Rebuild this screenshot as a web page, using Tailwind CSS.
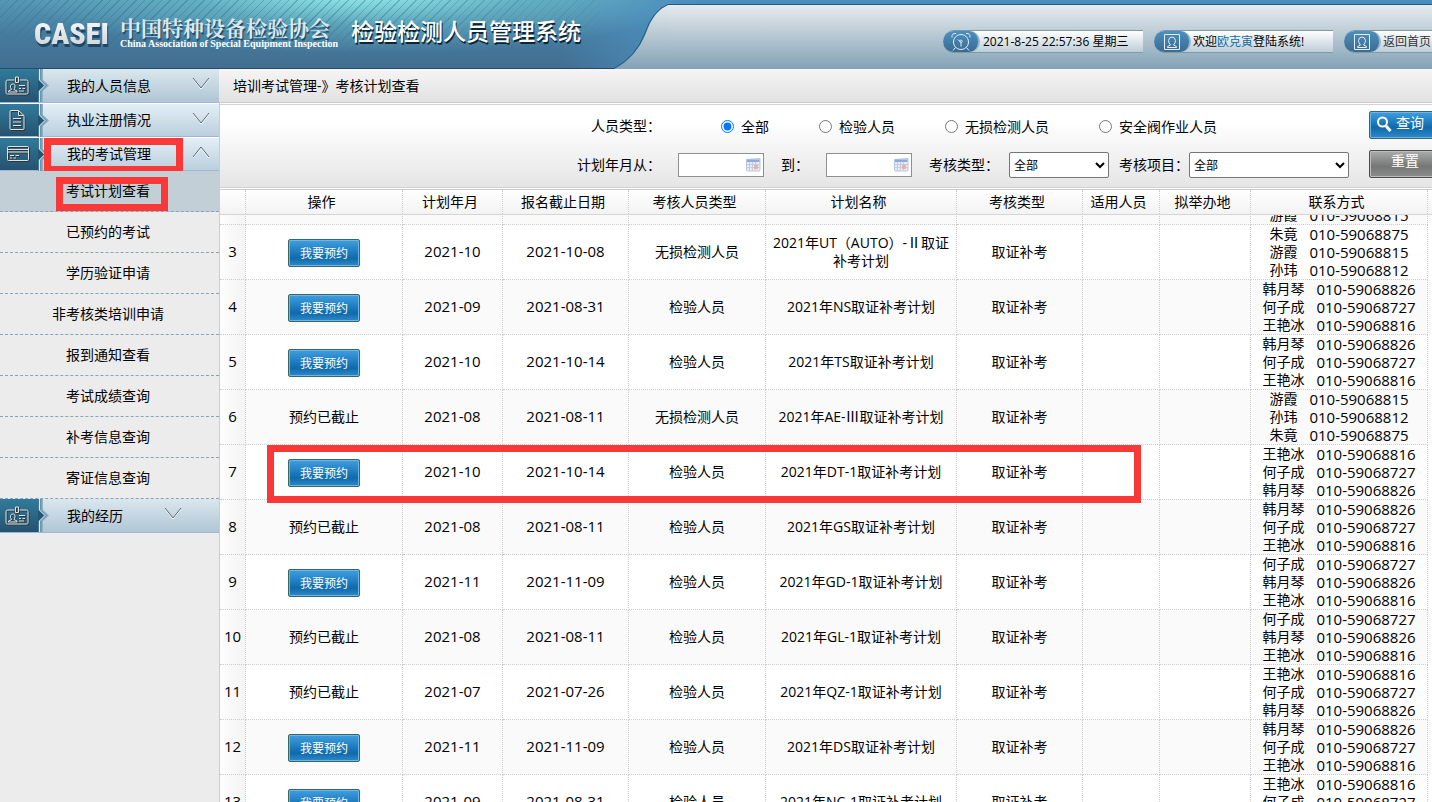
<!DOCTYPE html>
<html lang="zh-CN">
<head>
<meta charset="utf-8">
<title>检验检测人员管理系统</title>
<script src="https://cdn.jsdelivr.net/npm/@tailwindcss/browser@4"></script>
</head>
<body class="flex h-screen flex-col overflow-hidden bg-[#ececec] font-['Open_Sans','Noto_Sans_CJK_SC',sans-serif] text-[14px] leading-[18px] text-black">

<svg class="absolute size-0">
  <defs>
    <linearGradient id="panel" gradientUnits="userSpaceOnUse" x1="0" y1="4" x2="0" y2="69"><stop offset="0" stop-color="#e6ebee"/><stop offset=".5" stop-color="#b5c7d1"/><stop offset="1" stop-color="#83a2b6"/></linearGradient>
  </defs>
  <symbol id="i-card" viewBox="0 0 24 20"><path d="M9.500 4H2.500Q1 4 1 5.500V16.500Q1 18 2.500 18H21.500Q23 18 23 16.500V5.500Q23 4 21.500 4H14.500M10.500 1H13.500V6.500H10.500ZM3.500 16V15L6.500 13.500Q5 11.500 5.500 9.500Q6.500 7.500 8.500 8Q10.500 8.500 10 11Q9.700 12.500 9 13.500L12 15V16ZM14 9.500H20M14 12.500H16M17.500 12.500H20M14 15H19"/></symbol>
  <symbol id="i-doc" viewBox="0 0 24 22"><path d="M13.500 1.500H6Q5 1.500 5 2.500V19.500Q5 20.500 6 20.500H18Q19 20.500 19 19.500V6.500ZM13.500 1.500V6.500H19M8 9.500H16M8 13H16M8 16.500H16"/></symbol>
  <symbol id="i-pay" viewBox="0 0 24 20"><path d="M2.500 2.500H21.500Q22.500 2.500 22.500 3.500V15.500Q22.500 16.500 21.500 16.500H2.500Q1.500 16.500 1.500 15.500V3.500Q1.500 2.500 2.500 2.500ZM1.500 5.500H22.500M1.500 8H22.500M4 11.500H8M9.500 11.500H13M4 14H6M7.500 14H10"/></symbol>
  <symbol id="i-user" viewBox="0 0 18 18"><path d="M1.500 1.500H16.500V16.500H1.500ZM4.500 14.500V13.500L7.500 12Q5.500 10 5.500 7.500Q6 4 9 4Q12 4 12.500 7.500Q12.500 10 10.500 12L13.500 13.500V14.500Z"/></symbol>
  <symbol id="i-clock" viewBox="0 0 20 20"><path d="M10 2.500A7.500 7.500 0 1 1 9.990 2.500M1 5.500Q.5 1 5 1.500M19 5.500Q19.500 1 15 1.500M4.500 15.500L2 18.500M15.500 15.500L18 18.500M10 10V14.500M9.500 10L7 7.500M10 8A1.200 1.200 0 1 1 9.990 8"/></symbol>
  <symbol id="i-notch" viewBox="0 0 11 33"><path d="M3 0H5V11L11 16.500L5 22V33H3Z" fill="#8db0c2"/><path d="M0 0V11L5 16.500L0 22V33H3.500V22L9 16.500L3.500 11V0Z" fill="#6995ac"/><path d="M0 0H.5V11L6 16.500L.5 22V33H0Z" fill="#225573"/><path d="M1.500 0V11L7 16.500L1.500 22V33" fill="none" stroke="#dce8ee"/></symbol>
  <symbol id="i-down" viewBox="0 0 18 13"><path d="M1 2L9 12L17 2" stroke="#fff"/><path d="M1 1L9 11L17 1" stroke="#5a6a72"/></symbol>
  <symbol id="i-cal" viewBox="0 0 15 14"><path d="M.5 1.500L14 .5V12Q14 13 13 13H1.500Q.5 13 .5 12Z" fill="#e6ecf7" stroke="#b9c5dd"/><path d="M1 1.500H13.500V4H1Z" fill="#8fa9dc"/><path d="M3.500 4V12.500M6.500 4V12.500M9.500 4V12.500M1 6.500H13.500M1 9.500H13.500" stroke="#c0cde4"/><path d="M8 7H12V11H8Z" fill="#f0b09c"/></symbol>
</svg>

<header class="relative flex h-[69px] shrink-0 overflow-hidden bg-[radial-gradient(ellipse_340px_60px_at_360px_-6px,rgba(150,240,238,.95),rgba(120,210,215,.4)_50%,transparent),linear-gradient(to_right,transparent_560px,#4b8dbd_680px),linear-gradient(to_bottom,#5598b5,#467c9f_50%,#416d90)]">
  <div class="absolute inset-y-0 left-0 w-[600px] bg-[repeating-linear-gradient(135deg,rgba(30,90,120,.3)_0_1px,transparent_1px_6px)] mask-[radial-gradient(ellipse_420px_56px_at_260px_0px,black_40%,transparent)]"></div>
  <div class="relative flex w-[614px] shrink-0 items-center border-b border-[#274a6b] pl-[34px]">
    <div class="w-[86px] bg-[linear-gradient(#fff,#c6cdd2)] bg-clip-text font-['Roboto_Condensed','Liberation_Sans_Narrow',Roboto] text-[30px] leading-[40px] font-black text-transparent drop-shadow-[1px_3px_0_#1d4763]">CASEI</div>
    <div class="w-[231px] pb-1">
      <div class="font-['Noto_Serif_CJK_SC','Noto_Sans_CJK_SC',serif] text-[21px] leading-[23px] font-bold text-[#dde8ee] text-shadow-[1px_2px_1px_#1d4763]">中国特种设备检验协会</div>
      <div class="font-['Liberation_Serif',serif] text-[10px] leading-[10px] font-bold whitespace-nowrap text-white">China Association of Special Equipment Inspection</div>
    </div>
    <h1 class="pb-[6px] text-[23px] leading-[28px] font-medium whitespace-nowrap text-white text-shadow-[1px_2px_0_#0c2536]">检验检测人员管理系统</h1>
  </div>
  <svg class="relative h-[69px] w-[56px] shrink-0" viewBox="0 0 56 69" fill="none"><path d="M0 69Q22 58 32 33Q40 10 56 4V69Z" fill="url(#panel)"/><path d="M0 68.500Q22 57 31 33Q39 10 54 4.500H56" stroke="#2c5878"/></svg>
  <div class="relative mt-1 flex flex-1 justify-end border-t border-[#2c5878] bg-[linear-gradient(#e6ebee,#b5c7d1_50%,#83a2b6)]">
    <div class="flex w-[489px] gap-[11px] overflow-hidden pt-[25px] text-[12px]">
      <div class="flex h-[23px] w-[200px] shrink-0 items-center rounded-l-full border-y border-[#7e9bab] bg-[linear-gradient(#fff,#bccdd7)] whitespace-nowrap">
        <span class="mr-[3px] flex h-[21px] w-[37px] items-center justify-center rounded-full border-r-2 border-[#8db3cd] bg-[linear-gradient(#4c8fc0,#3a6b90)]"><svg class="size-[20px]" fill="none" stroke="#e3eef5"><use href="#i-clock"/></svg></span>
        <time>2021-8-25 22:57:36 星期三</time>
      </div>
      <div class="flex h-[23px] w-[179px] shrink-0 items-center rounded-l-full border-y border-[#7e9bab] bg-[linear-gradient(#fff,#bccdd7)] whitespace-nowrap">
        <span class="mr-[2px] flex h-[21px] w-[37px] items-center justify-center rounded-full border-r-2 border-[#8db3cd] bg-[linear-gradient(#4c8fc0,#3a6b90)]"><svg class="size-[18px]" fill="none" stroke="#e3eef5"><use href="#i-user"/></svg></span>
        <span>欢迎<a href="#" class="text-[#1b6c9f]">欧克寅</a>登陆系统!</span>
      </div>
      <div class="flex h-[23px] w-[120px] shrink-0 items-center rounded-l-full border-y border-[#7e9bab] bg-[linear-gradient(#fff,#bccdd7)] whitespace-nowrap">
        <span class="mr-[2px] flex h-[21px] w-[37px] items-center justify-center rounded-full border-r-2 border-[#8db3cd] bg-[linear-gradient(#4c8fc0,#3a6b90)]"><svg class="size-[18px]" fill="none" stroke="#e3eef5"><use href="#i-user"/></svg></span>
        <a href="#" class="text-[#333]">返回首页</a>
      </div>
    </div>
  </div>
</header>

<div class="flex min-h-0 flex-1">
  <nav class="w-[219px] shrink-0">
    <button type="button" class="flex h-[34px] w-full items-center border-b border-[#a3b4d6] bg-[linear-gradient(#dae7ee,#b0c6d5)]">
      <span class="flex h-full w-[38px] items-center bg-[linear-gradient(#317b9b,#255270)] pl-[5px]"><svg class="h-[20px] w-[24px] drop-shadow-[1px_1px_0_#333]" fill="none" stroke="#e2e2e2"><use href="#i-card"/></svg></span><svg class="mr-[18px] h-[33px] w-[11px]"><use href="#i-notch"/></svg>我的人员信息<svg class="mb-1 ml-[41px] h-[13px] w-[18px]" fill="none"><use href="#i-down"/></svg>
    </button>
    <button type="button" class="flex h-[34px] w-full items-center border-y border-t-white border-b-[#a3b4d6] bg-[linear-gradient(#e4eff6,#bacfdd)]">
      <span class="flex h-full w-[38px] items-center bg-[linear-gradient(#317b9b,#255270)] pl-[5px]"><svg class="h-[22px] w-[24px] drop-shadow-[1px_1px_0_#333]" fill="none" stroke="#e2e2e2"><use href="#i-doc"/></svg></span><svg class="mr-[18px] h-[33px] w-[11px]"><use href="#i-notch"/></svg>执业注册情况<svg class="mb-1 ml-[41px] h-[13px] w-[18px]" fill="none"><use href="#i-down"/></svg>
    </button>
    <button type="button" class="relative flex h-[34px] w-full items-center border-y border-t-white border-b-[#a3b4d6] bg-[linear-gradient(#e4eff6,#bacfdd)]">
      <span class="flex h-full w-[38px] items-center bg-[linear-gradient(#317b9b,#255270)] pl-[6px]"><svg class="h-[20px] w-[24px] drop-shadow-[1px_1px_0_#333]" fill="none" stroke="#e2e2e2"><use href="#i-pay"/></svg></span><svg class="mr-[18px] h-[33px] w-[11px]"><use href="#i-notch"/></svg>我的考试管理<svg class="mb-1 ml-[41px] h-[13px] w-[18px]" fill="none" viewBox="0 0 18 13"><path d="M1 12L9 2L17 12" stroke="#fff"/><path d="M1 11L9 1L17 11" stroke="#5a6a72"/></svg>
      <span class="absolute top-0 left-[44px] h-[35px] w-[139px] border-[7px] border-[#fb3838]"></span>
    </button>
    <div class="text-center">
      <a href="#" class="relative block h-[41px] border-b border-dashed border-[#86a5b8] bg-[#c2cfd6] pt-[11px] pr-[3px]">考试计划查看<span class="absolute top-[6px] left-[56px] h-[34px] w-[112px] border-[7px] border-[#fb3838]"></span></a>
      <a href="#" class="block h-[41px] border-b border-dashed border-[#86a5b8] pt-[11px] pr-[3px]">已预约的考试</a>
      <a href="#" class="block h-[41px] border-b border-dashed border-[#86a5b8] pt-[11px] pr-[3px]">学历验证申请</a>
      <a href="#" class="block h-[41px] border-b border-dashed border-[#86a5b8] pt-[11px] pr-[3px]">非考核类培训申请</a>
      <a href="#" class="block h-[41px] border-b border-dashed border-[#86a5b8] pt-[11px] pr-[3px]">报到通知查看</a>
      <a href="#" class="block h-[41px] border-b border-dashed border-[#86a5b8] pt-[11px] pr-[3px]">考试成绩查询</a>
      <a href="#" class="block h-[41px] border-b border-dashed border-[#86a5b8] pt-[11px] pr-[3px]">补考信息查询</a>
      <a href="#" class="block h-[41px] border-b border-dashed border-[#86a5b8] pt-[11px] pr-[3px]">寄证信息查询</a>
    </div>
    <button type="button" class="flex h-[34px] w-full items-center border-b border-[#a3b4d6] bg-[linear-gradient(#dae7ee,#b0c6d5)]">
      <span class="flex h-full w-[38px] items-center bg-[linear-gradient(#317b9b,#255270)] pl-[5px]"><svg class="h-[20px] w-[24px] drop-shadow-[1px_1px_0_#333]" fill="none" stroke="#e2e2e2"><use href="#i-card"/></svg></span><svg class="mr-[18px] h-[33px] w-[11px]"><use href="#i-notch"/></svg>我的经历<svg class="mb-1 ml-[41px] h-[13px] w-[18px]" fill="none"><use href="#i-down"/></svg>
    </button>
  </nav>

  <main class="flex min-w-0 flex-1 flex-col overflow-hidden">
    <div class="flex h-[34px] shrink-0 items-center border-b border-[#ccc] bg-[linear-gradient(#f6f4f4,#e2e2e2)] pl-[14px]">培训考试管理-》考核计划查看</div>
    <div class="flex min-h-0 flex-1 flex-col border-l border-[#ccc] bg-white">
      <form class="mt-px flex h-[84px] shrink-0 justify-end border-y border-[#d3d3d3] bg-[linear-gradient(#fff_20%,#e5e5e5)]">
        <div class="w-[772px] shrink-0">
          <fieldset class="flex h-[43px] items-center gap-[50px] pl-[14px] whitespace-nowrap">
            <span class="w-[80px] pb-[2px]">人员类型：</span>
            <label class="flex items-center gap-[7px]"><input type="radio" name="ptype" checked class="size-[13px]">全部</label>
            <label class="flex items-center gap-[7px]"><input type="radio" name="ptype" class="size-[13px]">检验人员</label>
            <label class="flex items-center gap-[7px]"><input type="radio" name="ptype" class="size-[13px]">无损检测人员</label>
            <label class="flex items-center gap-[7px]"><input type="radio" name="ptype" class="size-[13px]">安全阀作业人员</label>
          </fieldset>
          <div class="flex h-[34px] items-center whitespace-nowrap">
            <label for="from" class="w-[101px]">计划年月从：</label>
            <span class="relative mr-[17px] w-[86px]"><input id="from" type="text" class="block h-[24px] w-full border border-[#8f8f8f] bg-white px-1"><svg class="absolute top-[5px] right-[3px] h-[14px] w-[15px]"><use href="#i-cal"/></svg></span>
            <label for="to" class="w-[45px]">到：</label>
            <span class="relative mr-[17px] w-[86px]"><input id="to" type="text" class="block h-[24px] w-full border border-[#8f8f8f] bg-white px-1"><svg class="absolute top-[5px] right-[3px] h-[14px] w-[15px]"><use href="#i-cal"/></svg></span>
            <label for="kind" class="w-[80px]">考核类型：</label>
            <select id="kind" class="mr-[10px] h-[26px] w-[100px] rounded-xs border border-[#767676] bg-white text-[12px]"><option>全部</option></select>
            <label for="item" class="w-[70px]">考核项目：</label>
            <select id="item" class="h-[26px] w-[160px] rounded-xs border border-[#767676] bg-white text-[12px]"><option>全部</option></select>
          </div>
        </div>
        <div class="ml-[20px] w-[63px] shrink-0 overflow-hidden pt-[6px]">
          <button type="button" class="mb-[11px] flex h-[28px] w-[72px] items-center rounded-xs border border-[#37695f] bg-[linear-gradient(#3f9fe2,#0f69ab_60%,#2f8acb)] pb-[4px] pl-[6px] text-white inset-ring inset-ring-[#6db5e6]"><svg class="mt-[2px] mr-[4px] size-[16px]" viewBox="0 0 16 16" fill="none" stroke="#fff"><circle cx="6.500" cy="6" r="4.500" stroke-width="2"/><path d="M10 10L14.500 15" stroke-width="3"/></svg>查询</button>
          <button type="button" class="flex h-[28px] w-[72px] items-center justify-center rounded-xs border border-[#4c4c4c] bg-[linear-gradient(#ababab,#747775_60%,#8c8c8c)] pb-[6px] text-white inset-ring inset-ring-[#bdbdbd]">重置</button>
        </div>
      </form>

      <div class="mt-px shrink-0 border-y border-t-[#ccc] border-b-[#d5d5d5] bg-[linear-gradient(#fff,#f3f3f3)]">
        <table class="w-full table-fixed border-separate border-spacing-0">
          <colgroup><col class="w-[26px]"><col class="w-[157px]"><col class="w-[100px]"><col class="w-[126px]"><col class="w-[137px]"><col><col class="w-[126px]"><col class="w-[77px]"><col class="w-[91px]"><col class="w-[177px]"><col class="w-[4px]"></colgroup>
          <thead><tr id="head" class="h-[24px]"></tr></thead>
        </table>
      </div>
      <div class="relative min-h-0 flex-1 overflow-hidden">
        <table class="-mt-[45px] w-full table-fixed border-separate border-spacing-0 text-center">
          <colgroup><col class="w-[26px]"><col class="w-[157px]"><col class="w-[100px]"><col class="w-[126px]"><col class="w-[137px]"><col><col class="w-[126px]"><col class="w-[77px]"><col class="w-[91px]"><col class="w-[177px]"><col class="w-[4px]"></colgroup>
          <tbody id="rows"></tbody>
        </table>
        <div class="pointer-events-none absolute top-[230px] left-[47px] h-[58px] w-[874px] border-[7px] border-[#fb3838]"></div>
      </div>
    </div>
  </main>
</div>

<script>
const heads = ['', '操作', '计划年月', '报名截止日期', '考核人员类型', '计划名称', '考核类型', '适用人员', '拟举办地', '联系方式'];
document.getElementById('head').innerHTML = heads.map(h =>
  `<th scope="col" class="border-r border-dotted border-[#ccc] p-0 pr-[5px] font-normal">${h}</th>`).join('') + '<td></td>';

const tel = { '朱竟': '8875', '游霞': '8815', '孙玮': '8812', '韩月琴': '8826', '何子成': '8727', '王艳冰': '8816' };
const H = '韩月琴', K = '何子成', W = '王艳冰';
const data = [
  [3, 1, '2021-10', '2021-10-08', '无损检测人员', '2021年UT（AUTO）-Ⅱ取证补考计划', ['朱竟', '游霞', '孙玮']],
  [4, 1, '2021-09', '2021-08-31', '检验人员', '2021年NS取证补考计划', [H, K, W]],
  [5, 1, '2021-10', '2021-10-14', '检验人员', '2021年TS取证补考计划', [H, K, W]],
  [6, 0, '2021-08', '2021-08-11', '无损检测人员', '2021年AE-Ⅲ取证补考计划', ['游霞', '孙玮', '朱竟']],
  [7, 1, '2021-10', '2021-10-14', '检验人员', '2021年DT-1取证补考计划', [W, K, H]],
  [8, 0, '2021-08', '2021-08-11', '检验人员', '2021年GS取证补考计划', [H, K, W]],
  [9, 1, '2021-11', '2021-11-09', '检验人员', '2021年GD-1取证补考计划', [K, H, W]],
  [10, 0, '2021-08', '2021-08-11', '检验人员', '2021年GL-1取证补考计划', [K, H, W]],
  [11, 0, '2021-07', '2021-07-26', '检验人员', '2021年QZ-1取证补考计划', [W, K, H]],
  [12, 1, '2021-11', '2021-11-09', '检验人员', '2021年DS取证补考计划', [H, K, W]],
  [13, 1, '2021-09', '2021-08-31', '检验人员', '2021年NC-1取证补考计划', [W, K, H]],
];
const td = (content, extra = '') => `<td class="border-r border-b border-dotted border-[#ccc] p-0 ${extra}">${content}</td>`;
const contact = p => `<div class="flex justify-center gap-[12px]"><span>${p}</span><span class="text-[15px]">010-5906${tel[p]}</span></div>`;
const scrolledRow = '<tr class="h-[55px] bg-[#fafafa]">' +
  td('', 'bg-[linear-gradient(to_right,#fdfdfd,#f4f4f4)]') + td('').repeat(8) + td(contact('游霞'), 'align-bottom') + '<td></td></tr>';
document.getElementById('rows').innerHTML = scrolledRow + data.map(([n, open, month, due, who, plan, people]) =>
  `<tr class="h-[55px] ${n % 2 ? 'bg-white' : 'bg-[#fafafa]'}">` +
  td(n, 'bg-[linear-gradient(to_right,#fdfdfd,#f4f4f4)] pb-[2px] text-[15px]') +
  td(open ? '<button type="button" class="mt-[2px] block h-[28px] w-[72px] mx-auto rounded-xs border border-[#37695f] bg-[linear-gradient(#3f9fe2,#0f69ab_70%,#2f8acb)] pt-[2px] text-[12px] text-white inset-ring inset-ring-[#6db5e6]">我要预约</button>' : '预约已截止') +
  td(month, 'pb-[2px] text-[15px]') + td(due, 'pb-[2px] text-[15px]') + td(who) + td(plan, 'px-1') + td('取证补考') + td('') + td('') +
  td(people.map(contact).join('')) +
  '<td></td></tr>').join('');
</script>
</body>
</html>
